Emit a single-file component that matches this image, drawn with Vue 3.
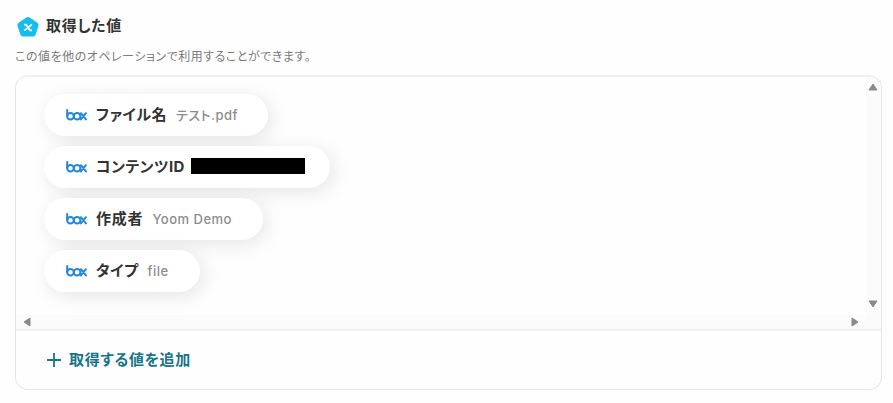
<script setup>
import { ref } from 'vue'

const items = ref([
  { key: 'name', label: 'ファイル名', value: 'テスト.pdf', width: 224 },
  { key: 'id', label: 'コンテンツID', masked: true, width: 286 },
  { key: 'author', label: '作成者', value: 'Yoom Demo', width: 219 },
  { key: 'type', label: 'タイプ', value: 'file', width: 155.5 },
])
</script>

<template>
  <section class="output">
    <header class="head">
      <svg class="head-icon" viewBox="0 0 24 22">
        <path
          d="M10.2 1.6Q12 .4 13.8 1.6L21.3 6.8Q23.1 8.1 22.4 10.2L19.6 18.4Q18.9 20.6 16.6 20.6H7.4Q5.1 20.6 4.4 18.4L1.6 10.2Q.9 8.1 2.7 6.8Z"
          fill="#13bdee"
        />
        <path
          d="M8 8.6h1.4q.6 0 1 .6l3.2 4.6q.4.6 1 .6H16M15.9 8.4L8.3 14.6"
          fill="none"
          stroke="#fff"
          stroke-width="1.8"
        />
      </svg>
      <h2 class="title">取得した値</h2>
    </header>
    <p class="lead">この値を他のオペレーションで利用することができます。</p>

    <div class="panel">
      <div class="scroll">
        <ul class="list">
          <li v-for="item in items" :key="item.key" class="pill" :style="{ width: item.width + 'px' }">
            <svg class="box-logo" viewBox="0 0 21 12">
              <g fill="none" stroke="#2088d6" stroke-width="2" stroke-linecap="round">
                <path d="M1.2 1v6" />
                <circle cx="4.5" cy="7.2" r="3.3" />
                <circle cx="11.1" cy="7.2" r="3.3" />
                <path d="M14.9 4.2l5 6.2M19.9 4.2l-5 6.2" />
              </g>
            </svg>
            <span class="label" :class="item.key">{{ item.label }}</span>
            <span v-if="item.masked" class="mask"></span>
            <span v-else class="value">{{ item.value }}</span>
          </li>
        </ul>

        <div class="bar-y">
          <svg class="arrow-y" viewBox="0 0 10 8"><path d="M5 1L9 7H1Z" /></svg>
          <svg class="arrow-y" viewBox="0 0 10 8"><path d="M1 1H9L5 7Z" /></svg>
        </div>
        <div class="bar-x">
          <svg class="arrow-x" viewBox="0 0 8 10"><path d="M7 1V9L1 5Z" /></svg>
          <svg class="arrow-x" viewBox="0 0 8 10"><path d="M1 1L7 5L1 9Z" /></svg>
        </div>
        <div class="corner"></div>
      </div>

      <button class="add" type="button">
        <svg class="plus" viewBox="0 0 14 14">
          <path d="M7 0v14M0 7h14" fill="none" stroke="#17748a" stroke-width="1.8" />
        </svg>
        <span class="add-text">取得する値を追加</span>
      </button>
    </div>
  </section>
</template>

<style>
body {
  background: #fefefe;
}
</style>

<style scoped>
.output {
  box-sizing: border-box;
  height: 403px;
  padding: 15px 11px 0 15px;
  overflow: hidden;
  font-family: Inter, 'Noto Sans CJK JP', sans-serif;
  font-feature-settings: 'palt';
  color: #333;
}

.head {
  display: flex;
  align-items: center;
  height: 23px;
  padding-left: 1px;
}

.head-icon {
  width: 24px;
  height: 22px;
  margin-right: 6px;
}

.title {
  margin: 0 0 2px;
  font-size: 15px;
  line-height: 22px;
  font-weight: 700;
  letter-spacing: 0.65px;
}

.lead {
  margin: 10px 0 0;
  height: 27px;
  font-size: 12px;
  line-height: 17px;
  letter-spacing: 0.53px;
  color: #7a7a7a;
  white-space: nowrap;
}

/* PANEL */
.panel {
  box-sizing: border-box;
  height: 315px;
  border: 1px solid #e6e6e6;
  border-top: 2px solid #f0f0f0;
  border-radius: 13px;
  overflow: hidden;
  background: #fefefe;
}

.scroll {
  display: grid;
  grid-template: 238px 14px / 1fr 15px;
  border-bottom: 2px solid #efefef;
}

.list {
  margin: 0;
  padding: 17px 0 0 28px;
  list-style: none;
  display: flex;
  flex-direction: column;
  gap: 10px;
  overflow: hidden;
}

.pill {
  box-sizing: border-box;
  display: flex;
  align-items: center;
  height: 42px;
  padding-left: 22px;
  border-radius: 21px;
  background: #fff;
  box-shadow: 4px 4px 20px rgba(0, 0, 0, 0.1);
  white-space: nowrap;
}

.box-logo {
  width: 21px;
  height: 12px;
  margin-right: 9px;
  flex: none;
}

.label {
  font-size: 15px;
  line-height: 22px;
  font-weight: 700;
  letter-spacing: 0.5px;
  margin-bottom: 1px;
}

.label.author {
  letter-spacing: 0.8px;
}

.value {
  margin-left: 9px;
  font-size: 13px;
  line-height: 20px;
  font-weight: 450;
  letter-spacing: 0.5px;
  color: #8c8c8c;
}

.mask {
  width: 114px;
  height: 16px;
  margin: 0 0 2px 6px;
  background: #000;
}

/* SCROLLBARS */
.bar-y,
.bar-x,
.corner {
  background: #fbfbfb;
}

.bar-y {
  display: flex;
  flex-direction: column;
  align-items: center;
  justify-content: space-between;
  padding: 6px 1px 7px 0;
}

.bar-x {
  display: flex;
  align-items: center;
  justify-content: space-between;
  padding: 0 7px;
}

.arrow-y,
.arrow-x {
  fill: #8a8a8a;
  stroke: #8a8a8a;
  stroke-width: 1;
  stroke-linejoin: round;
}

.arrow-y {
  width: 10px;
  height: 8px;
}

.arrow-x {
  width: 8px;
  height: 10px;
}

/* FOOTER */
.add {
  display: flex;
  align-items: center;
  height: 57px;
  padding: 0 0 0 31px;
  border: none;
  background: none;
  font-family: inherit;
  font-feature-settings: inherit;
  color: #17748a;
  cursor: pointer;
}

.plus {
  width: 14px;
  height: 14px;
  margin-right: 8px;
}

.add-text {
  font-size: 15px;
  line-height: 22px;
  font-weight: 700;
  letter-spacing: 0.65px;
}
</style>
